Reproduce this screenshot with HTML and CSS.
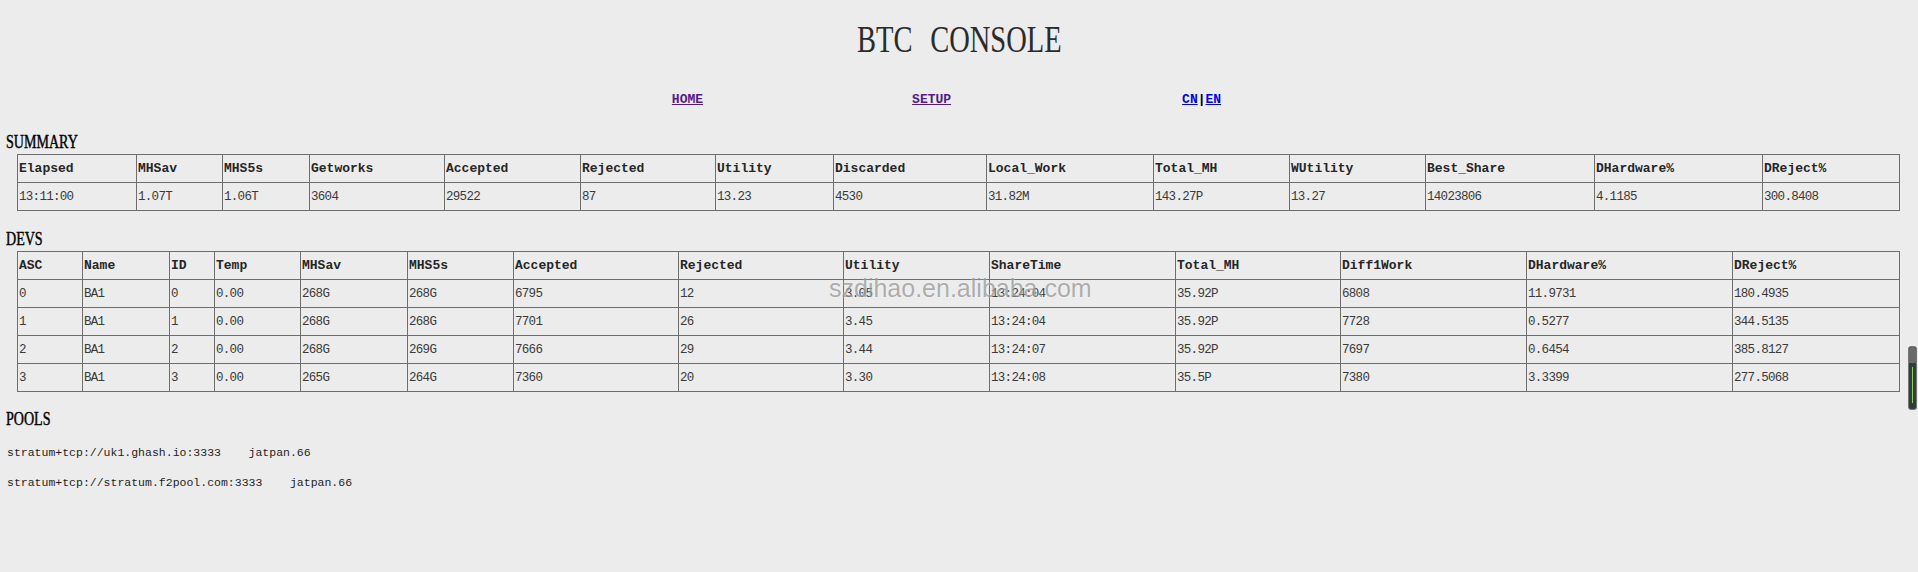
FILE: index.html
```html
<!DOCTYPE html>
<html lang="en">
<head>
    <meta charset="UTF-8">
    <title>BTC CONSOLE</title>
    <link rel="stylesheet" href="styles.css">
</head>
<body>
    <div class="top">
        <h1 class="title"><span>BTC CONSOLE</span></h1>
        <div class="nav">
            <a class="visited" href="#">HOME</a>
            <a class="visited setup" href="#">SETUP</a>
            <span class="lang"><a href="#">CN</a>|<a href="#">EN</a></span>
        </div>
    </div>

    <h3 class="block-title"><span>SUMMARY</span></h3>
    <table class="grid">
        <colgroup>
            <col style="width:119px"><col style="width:86px"><col style="width:87px"><col style="width:135px">
            <col style="width:136px"><col style="width:135px"><col style="width:118px"><col style="width:153px">
            <col style="width:167px"><col style="width:136px"><col style="width:136px"><col style="width:169px">
            <col style="width:168px"><col style="width:137px">
        </colgroup>
        <tr>
            <th>Elapsed</th><th>MHSav</th><th>MHS5s</th><th>Getworks</th><th>Accepted</th><th>Rejected</th><th>Utility</th>
            <th>Discarded</th><th>Local_Work</th><th>Total_MH</th><th>WUtility</th><th>Best_Share</th><th>DHardware%</th><th>DReject%</th>
        </tr>
        <tr>
            <td>13:11:00</td><td>1.07T</td><td>1.06T</td><td>3604</td><td>29522</td><td>87</td><td>13.23</td>
            <td>4530</td><td>31.82M</td><td>143.27P</td><td>13.27</td><td>14023806</td><td>4.1185</td><td>300.8408</td>
        </tr>
    </table>

    <h3 class="block-title devs-title"><span>DEVS</span></h3>
    <table class="grid">
        <colgroup>
            <col style="width:65px"><col style="width:87px"><col style="width:45px"><col style="width:86px">
            <col style="width:107px"><col style="width:106px"><col style="width:165px"><col style="width:165px">
            <col style="width:146px"><col style="width:186px"><col style="width:165px"><col style="width:186px">
            <col style="width:206px"><col style="width:167px">
        </colgroup>
        <tr>
            <th>ASC</th><th>Name</th><th>ID</th><th>Temp</th><th>MHSav</th><th>MHS5s</th><th>Accepted</th>
            <th>Rejected</th><th>Utility</th><th>ShareTime</th><th>Total_MH</th><th>Diff1Work</th><th>DHardware%</th><th>DReject%</th>
        </tr>
        <tr>
            <td>0</td><td>BA1</td><td>0</td><td>0.00</td><td>268G</td><td>268G</td><td>6795</td>
            <td>12</td><td>3.05</td><td>13:24:04</td><td>35.92P</td><td>6808</td><td>11.9731</td><td>180.4935</td>
        </tr>
        <tr>
            <td>1</td><td>BA1</td><td>1</td><td>0.00</td><td>268G</td><td>268G</td><td>7701</td>
            <td>26</td><td>3.45</td><td>13:24:04</td><td>35.92P</td><td>7728</td><td>0.5277</td><td>344.5135</td>
        </tr>
        <tr>
            <td>2</td><td>BA1</td><td>2</td><td>0.00</td><td>268G</td><td>269G</td><td>7666</td>
            <td>29</td><td>3.44</td><td>13:24:07</td><td>35.92P</td><td>7697</td><td>0.6454</td><td>385.8127</td>
        </tr>
        <tr>
            <td>3</td><td>BA1</td><td>3</td><td>0.00</td><td>265G</td><td>264G</td><td>7360</td>
            <td>20</td><td>3.30</td><td>13:24:08</td><td>35.5P</td><td>7380</td><td>3.3399</td><td>277.5068</td>
        </tr>
    </table>

    <h3 class="block-title pools-title"><span>POOLS</span></h3>
    <div class="pools">
        <div class="pool">stratum+tcp://uk1.ghash.io:3333&nbsp;&nbsp;&nbsp;&nbsp;jatpan.66</div>
        <div class="pool">stratum+tcp://stratum.f2pool.com:3333&nbsp;&nbsp;&nbsp;&nbsp;jatpan.66</div>
    </div>

    <!-- watermark + side widget from the screenshot -->
    <div class="watermark">szdihao.en.alibaba.com</div>
    <div class="side-widget"><i></i></div>
</body>
</html>
```

FILE: styles.css
```css
html, body {
    margin: 0;
    padding: 0;
}
body {
    position: relative;
    background-color: #ececec;
    color: #222;
    font-family: "Liberation Mono", monospace;
    height: 572px;
    overflow: hidden;
}
.top {
    padding-top: 17px;
}
.title {
    margin: 0;
    height: 44px;
    line-height: 44px;
    text-align: center;
    font-family: "Liberation Serif", serif;
    font-size: 38px;
    font-weight: normal;
    color: #2b2b2b;
}
.title span {
    display: inline-block;
    transform: scaleX(0.75);
    word-spacing: 14px;
}
.nav {
    display: flex;
    justify-content: center;
    margin-top: 29px;
    padding-right: 25px;
    height: 20px;
    line-height: 20px;
    font-size: 13px;
    font-weight: bold;
}
.nav a {
    color: #0000ee;
}
.nav a.visited {
    color: #551a8b;
}
.nav .setup {
    margin-left: 209px;
}
.nav .lang {
    margin-left: 231px;
    color: #000;
}
.block-title {
    margin: 22px 0 2px 6px;
    height: 20px;
    line-height: 20px;
    font-family: "Liberation Serif", serif;
    font-size: 18px;
    font-weight: normal;
    color: #000;
    -webkit-text-stroke: 0.4px #000;
}
.block-title span {
    display: inline-block;
    transform: scaleX(0.78);
    transform-origin: left center;
}
.devs-title {
    margin-top: 18px;
    margin-bottom: 2px;
}
.pools-title {
    margin-top: 17px;
}
.grid {
    margin-left: 17px;
    width: 1882px;
    border-collapse: collapse;
    table-layout: fixed;
}
.grid th, .grid td {
    height: 27px;
    padding: 0 1px;
    border: 1px solid #6e6e6e;
    text-align: left;
    vertical-align: middle;
    white-space: nowrap;
    overflow: hidden;
}
.grid th {
    font-size: 13px;
    font-weight: bold;
    color: #262626;
}
.grid td {
    font-size: 12.5px;
    letter-spacing: -0.7px;
    color: #3a3a3a;
}
.pools {
    margin: 9px 0 0 7px;
}
.pool {
    height: 30px;
    line-height: 30px;
    font-size: 11.5px;
    color: #1e1e1e;
}
.watermark {
    position: absolute;
    left: 829px;
    top: 276px;
    font-family: "Liberation Sans", Arial, sans-serif;
    font-size: 25px;
    line-height: 25px;
    color: rgba(110, 110, 110, 0.55);
    text-shadow: 0 0 2px rgba(255, 255, 255, 0.7);
}
.side-widget {
    position: absolute;
    right: 1px;
    top: 346px;
    width: 7px;
    height: 62px;
    border-radius: 3px;
    background: #2e3f3b;
    border: 1px solid #777;
}
.side-widget::before {
    content: "";
    display: block;
    height: 16px;
    border-radius: 3px 3px 0 0;
    background: #6a6a6a;
}
.side-widget i {
    display: block;
    margin: 4px auto 0;
    width: 1px;
    height: 36px;
    background: #8fd06a;
}
```
